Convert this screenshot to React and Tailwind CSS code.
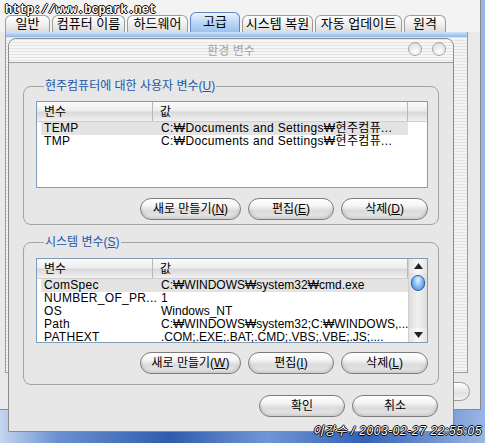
const ko = "font-['Liberation_Sans','Noto_Sans_CJK_KR',sans-serif]";

const tabs = [
  { label: "일반", w: "w-[45px]" },
  { label: "컴퓨터 이름", w: "w-[73px]" },
  { label: "하드웨어", w: "w-[61px]" },
  { label: "고급", w: "w-[50px]", active: true },
  { label: "시스템 복원", w: "w-[71px]" },
  { label: "자동 업데이트", w: "w-[87px]" },
  { label: "원격", w: "w-[42px]" },
];

const userVars = [
  { name: "TEMP", value: "C:₩Documents and Settings₩현주컴퓨...", selected: true },
  { name: "TMP", value: "C:₩Documents and Settings₩현주컴퓨..." },
];

const sysVars = [
  { name: "ComSpec", value: "C:₩WINDOWS₩system32₩cmd.exe", selected: true },
  { name: "NUMBER_OF_PR...", value: "1" },
  { name: "OS", value: "Windows_NT" },
  { name: "Path", value: "C:₩WINDOWS₩system32;C:₩WINDOWS,..." },
  { name: "PATHEXT", value: ".COM;.EXE;.BAT;.CMD;.VBS;.VBE;.JS;...." },
];

function AquaButton({ children, className }) {
  return (
    <button
      className={`h-[22px] rounded-full border border-[#7b7b7b] bg-[linear-gradient(180deg,#ffffff_0%,#f4f4f4_35%,#dadada_60%,#eeeeee_100%)] text-[12px] leading-none text-black shadow-[inset_0_1px_0_#ffffff,inset_0_-2px_3px_rgba(0,0,0,0.15)] ${className}`}
    >
      {children}
    </button>
  );
}

function Arrow({ up }) {
  return (
    <div className="flex h-[14px] items-center justify-center bg-[linear-gradient(90deg,#e4e4e4,#fafafa_50%,#e4e4e4)]">
      <svg width="9" height="6" viewBox="0 0 9 6">
        <polygon points={up ? "4.5,0 9,6 0,6" : "0,0 9,0 4.5,6"} fill="#222" />
      </svg>
    </div>
  );
}

function Scrollbar() {
  return (
    <div className="flex w-[19px] flex-col border-l border-[#d0d0d0]">
      <Arrow up />
      <div className="flex-1 bg-[linear-gradient(90deg,#dcdcdc,#f2f2f2_50%,#dcdcdc)] px-[2px] pt-[2px]">
        <div className="h-[16px] rounded-full border border-[#2c5ea8] bg-[radial-gradient(ellipse_at_50%_30%,#e6f2ff_0%,#8cc0f4_45%,#2f78d8_100%)]" />
      </div>
      <Arrow />
    </div>
  );
}

function VarList({ rows, scroll, height, valueTracking }) {
  return (
    <div className={`flex border border-[#7f9db9] bg-white ${height}`}>
      <div className="flex flex-1 flex-col">
        <div className="flex h-[20px] border-b border-[#cfcfcf] bg-[linear-gradient(180deg,#fbfbfb_0%,#eeeeee_45%,#d9d9d9_55%,#f1f1f1_100%)] text-[12px] leading-[20px]">
          <div className="w-[116px] border-r border-[#b8b8b8] pl-[7px]">변수</div>
          <div className="w-[255px] border-r border-[#b8b8b8] pl-[7px]">값</div>
          <div className="flex-1" />
        </div>
        {rows.map((r) => (
          <div
            key={r.name}
            className={`ml-[4px] flex h-[13px] w-[367px] text-[12px] leading-[13px] text-black ${r.selected ? "bg-[#e3e3e3]" : ""}`}
          >
            <div className="w-[120px] shrink-0 whitespace-nowrap pl-[3px] tracking-[0.3px]">{r.name}</div>
            <div className={`min-w-0 flex-1 whitespace-nowrap ${valueTracking}`}>{r.value}</div>
          </div>
        ))}
      </div>
      {scroll && <Scrollbar />}
    </div>
  );
}

function Group({ label, children, className }) {
  return (
    <fieldset className={`rounded-[8px] border border-[#a3a3a3] pl-[12px] pr-[10px] ${className}`}>
      <legend className="ml-[8px] px-[1px] text-[12px] leading-[16px] text-[#2456a8]">{label}</legend>
      {children}
    </fieldset>
  );
}

export default function App() {
  return (
    <div className={`relative h-[443px] w-[485px] overflow-hidden bg-[linear-gradient(90deg,#c4d6f0_0%,#6a90d2_12%,#2f5cae_35%,#7096d6_55%,#3461b5_75%,#9ab6e4_100%)] ${ko}`}>
      {/* properties window behind */}
      <div className="absolute left-0 top-0 flex h-[410px] w-[481px] flex-col border-b border-r border-[#8a8a8a] bg-[#e9e9e9]">
        <div className="flex h-[32px] items-end gap-[2px] bg-[#f3f3f3] pl-[5px]">
          {tabs.map((t) => (
            <div
              key={t.label}
              className={`${t.w} flex items-start justify-center rounded-t-[6px] border border-b-0 text-[13px] leading-[16px] text-black ${
                t.active
                  ? "h-[20px] border-[#5f87c2] bg-[linear-gradient(180deg,#eaf3fd_0%,#bcd6f5_50%,#9cc2ee_100%)] pt-[1px]"
                  : "h-[17px] border-[#9c9c9c] bg-[linear-gradient(180deg,#ffffff_0%,#f0f0f0_50%,#dcdcdc_100%)]"
              }`}
            >
              {t.label}
            </div>
          ))}
        </div>
        <div className="ml-[5px] flex h-[341px] w-[463px] flex-col border-x border-b border-[#9c9c9c]">
          <div className="h-[5px] bg-[linear-gradient(180deg,#cfe2f8,#8fb7ea)]" />
          <div className="flex-1 bg-[repeating-linear-gradient(180deg,#e2e2e2_0px,#e2e2e2_1px,#f4f4f4_1px,#f4f4f4_3px)]" />
        </div>
        <div className="mt-[9px] flex justify-end pr-[10px]">
          <div className="h-[19px] w-[80px] rounded-full border border-[#9a9a9a] bg-[linear-gradient(180deg,#ffffff,#e2e2e2_60%,#f0f0f0)]" />
        </div>
      </div>

      {/* watermark */}
      <div className="absolute left-[5px] top-[3px] font-['Liberation_Mono',monospace] text-[12px] font-bold leading-[14px] text-white [text-shadow:1px_0_0_#000,-1px_0_0_#000,0_1px_0_#000,0_-1px_0_#000]">
        http://www.bcpark.net
      </div>

      {/* environment variables dialog */}
      <div className="absolute left-[8px] top-[38px] flex h-[394px] w-[446px] flex-col rounded-t-[8px] border border-[#8c8c8c] bg-[#e7e7e7]">
        <div className="relative flex h-[24px] items-center justify-center rounded-t-[8px] border-b border-[#9a9a9a] bg-[repeating-linear-gradient(180deg,#e4e4e4_0px,#e4e4e4_1px,#f6f6f6_1px,#f6f6f6_3px)]">
          <span className="text-[12px] text-[#a4a4a4]">환경 변수</span>
          <div className="absolute right-[7px] top-[3px] flex gap-[10px]">
            <div className="h-[14px] w-[14px] rounded-full border border-[#a5a5a5] bg-[radial-gradient(circle_at_50%_70%,#ffffff,#d6d6d6)]" />
            <div className="h-[14px] w-[14px] rounded-full border border-[#a5a5a5] bg-[radial-gradient(circle_at_50%_70%,#ffffff,#d6d6d6)]" />
          </div>
        </div>

        <div className="flex flex-1 flex-col px-[14px]">
          <Group label={<>현주컴퓨터에 대한 사용자 변수(<u>U</u>)</>} className="mt-[15px] pb-[4px]">
            <div className="mt-[7px]">
              <VarList rows={userVars} height="h-[87px]" valueTracking="tracking-[0.35px]" />
            </div>
            <div className="mt-[10px] flex justify-end gap-[7px]">
              <AquaButton className="w-[101px]">새로 만들기(<u>N</u>)</AquaButton>
              <AquaButton className="w-[86px]">편집(<u>E</u>)</AquaButton>
              <AquaButton className="w-[87px]">삭제(<u>D</u>)</AquaButton>
            </div>
          </Group>

          <Group label={<>시스템 변수(<u>S</u>)</>} className="mt-[9px] pb-[10px]">
            <div className="mt-[8px]">
              <VarList rows={sysVars} scroll height="h-[85px]" valueTracking="tracking-normal" />
            </div>
            <div className="mt-[9px] flex justify-end gap-[7px]">
              <AquaButton className="w-[101px]">새로 만들기(<u>W</u>)</AquaButton>
              <AquaButton className="w-[86px]">편집(<u>I</u>)</AquaButton>
              <AquaButton className="w-[87px]">삭제(<u>L</u>)</AquaButton>
            </div>
          </Group>

          <div className="mt-[10px] flex justify-end gap-[7px] pr-[1px]">
            <AquaButton className="w-[86px]">확인</AquaButton>
            <AquaButton className="w-[86px]">취소</AquaButton>
          </div>
        </div>
      </div>

      {/* signature */}
      <div className="absolute right-[3px] top-[424px] text-[12px] italic leading-[14px] tracking-[0.6px] text-white [text-shadow:1px_0_0_#000,-1px_0_0_#000,0_1px_0_#000,0_-1px_0_#000]">
        이강수 / 2003-02-27 22:55:05
      </div>
    </div>
  );
}
